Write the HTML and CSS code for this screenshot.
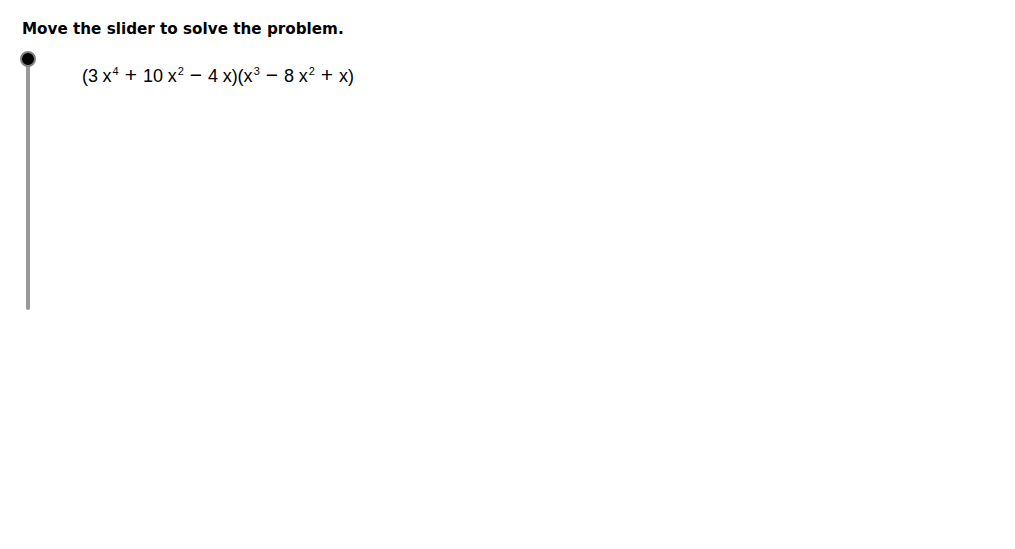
FILE: index.html
```html
<!DOCTYPE html>
<html>
<head>
<meta charset="utf-8">
<link rel="stylesheet" href="styles.css">
</head>
<body>
<div class="page">
  <h1 class="title">Move the slider to solve the problem.</h1>
  <div class="row">
    <div class="slider">
      <div class="track"></div>
      <div class="knob"></div>
    </div>
    <div class="expr">(3<span class="c">x</span><sup>4</sup><span class="op">+</span>10<span class="c">x</span><sup>2</sup><span class="op">&minus;</span>4<span class="c">x</span>)(x<sup>3</sup><span class="op">&minus;</span>8<span class="c">x</span><sup>2</sup><span class="op">+</span>x)</div>
  </div>
</div>
</body>
</html>
```
FILE: styles.css
```css
html, body {
  margin: 0;
  padding: 0;
  background: #fff;
}
.page {
  width: 1015px;
  height: 549px;
  overflow: hidden;
}
.title {
  margin: 0;
  padding: 18px 0 0 22px;
  font-family: "DejaVu Sans", sans-serif;
  font-weight: bold;
  font-size: 15.2px;
  line-height: 22px;
  color: #000;
}
.row {
  display: flex;
  padding-top: 11px;
}
.slider {
  position: relative;
  width: 20px;
  margin-left: 18px;
  height: 260px;
}
.track {
  position: absolute;
  left: 8px;
  top: 7px;
  width: 4px;
  height: 252px;
  background: #999;
  border-radius: 2px;
}
.knob {
  position: absolute;
  left: 2px;
  top: 0;
  width: 12px;
  height: 12px;
  border-radius: 50%;
  background: #000;
  border: 2px solid #808080;
}
.expr {
  margin-left: 44px;
  padding-top: 15px;
  font-family: "Liberation Sans", sans-serif;
  font-size: 18px;
  color: #000;
  line-height: 21px;
  white-space: nowrap;
}
.expr .c {
  margin-left: 4.6px;
}
.expr .op {
  margin: 0 6px;
  font-size: 21px;
  line-height: 0;
}
.expr sup {
  font-size: 11px;
  vertical-align: 7px;
  line-height: 0;
  margin-left: 1px;
}
```
